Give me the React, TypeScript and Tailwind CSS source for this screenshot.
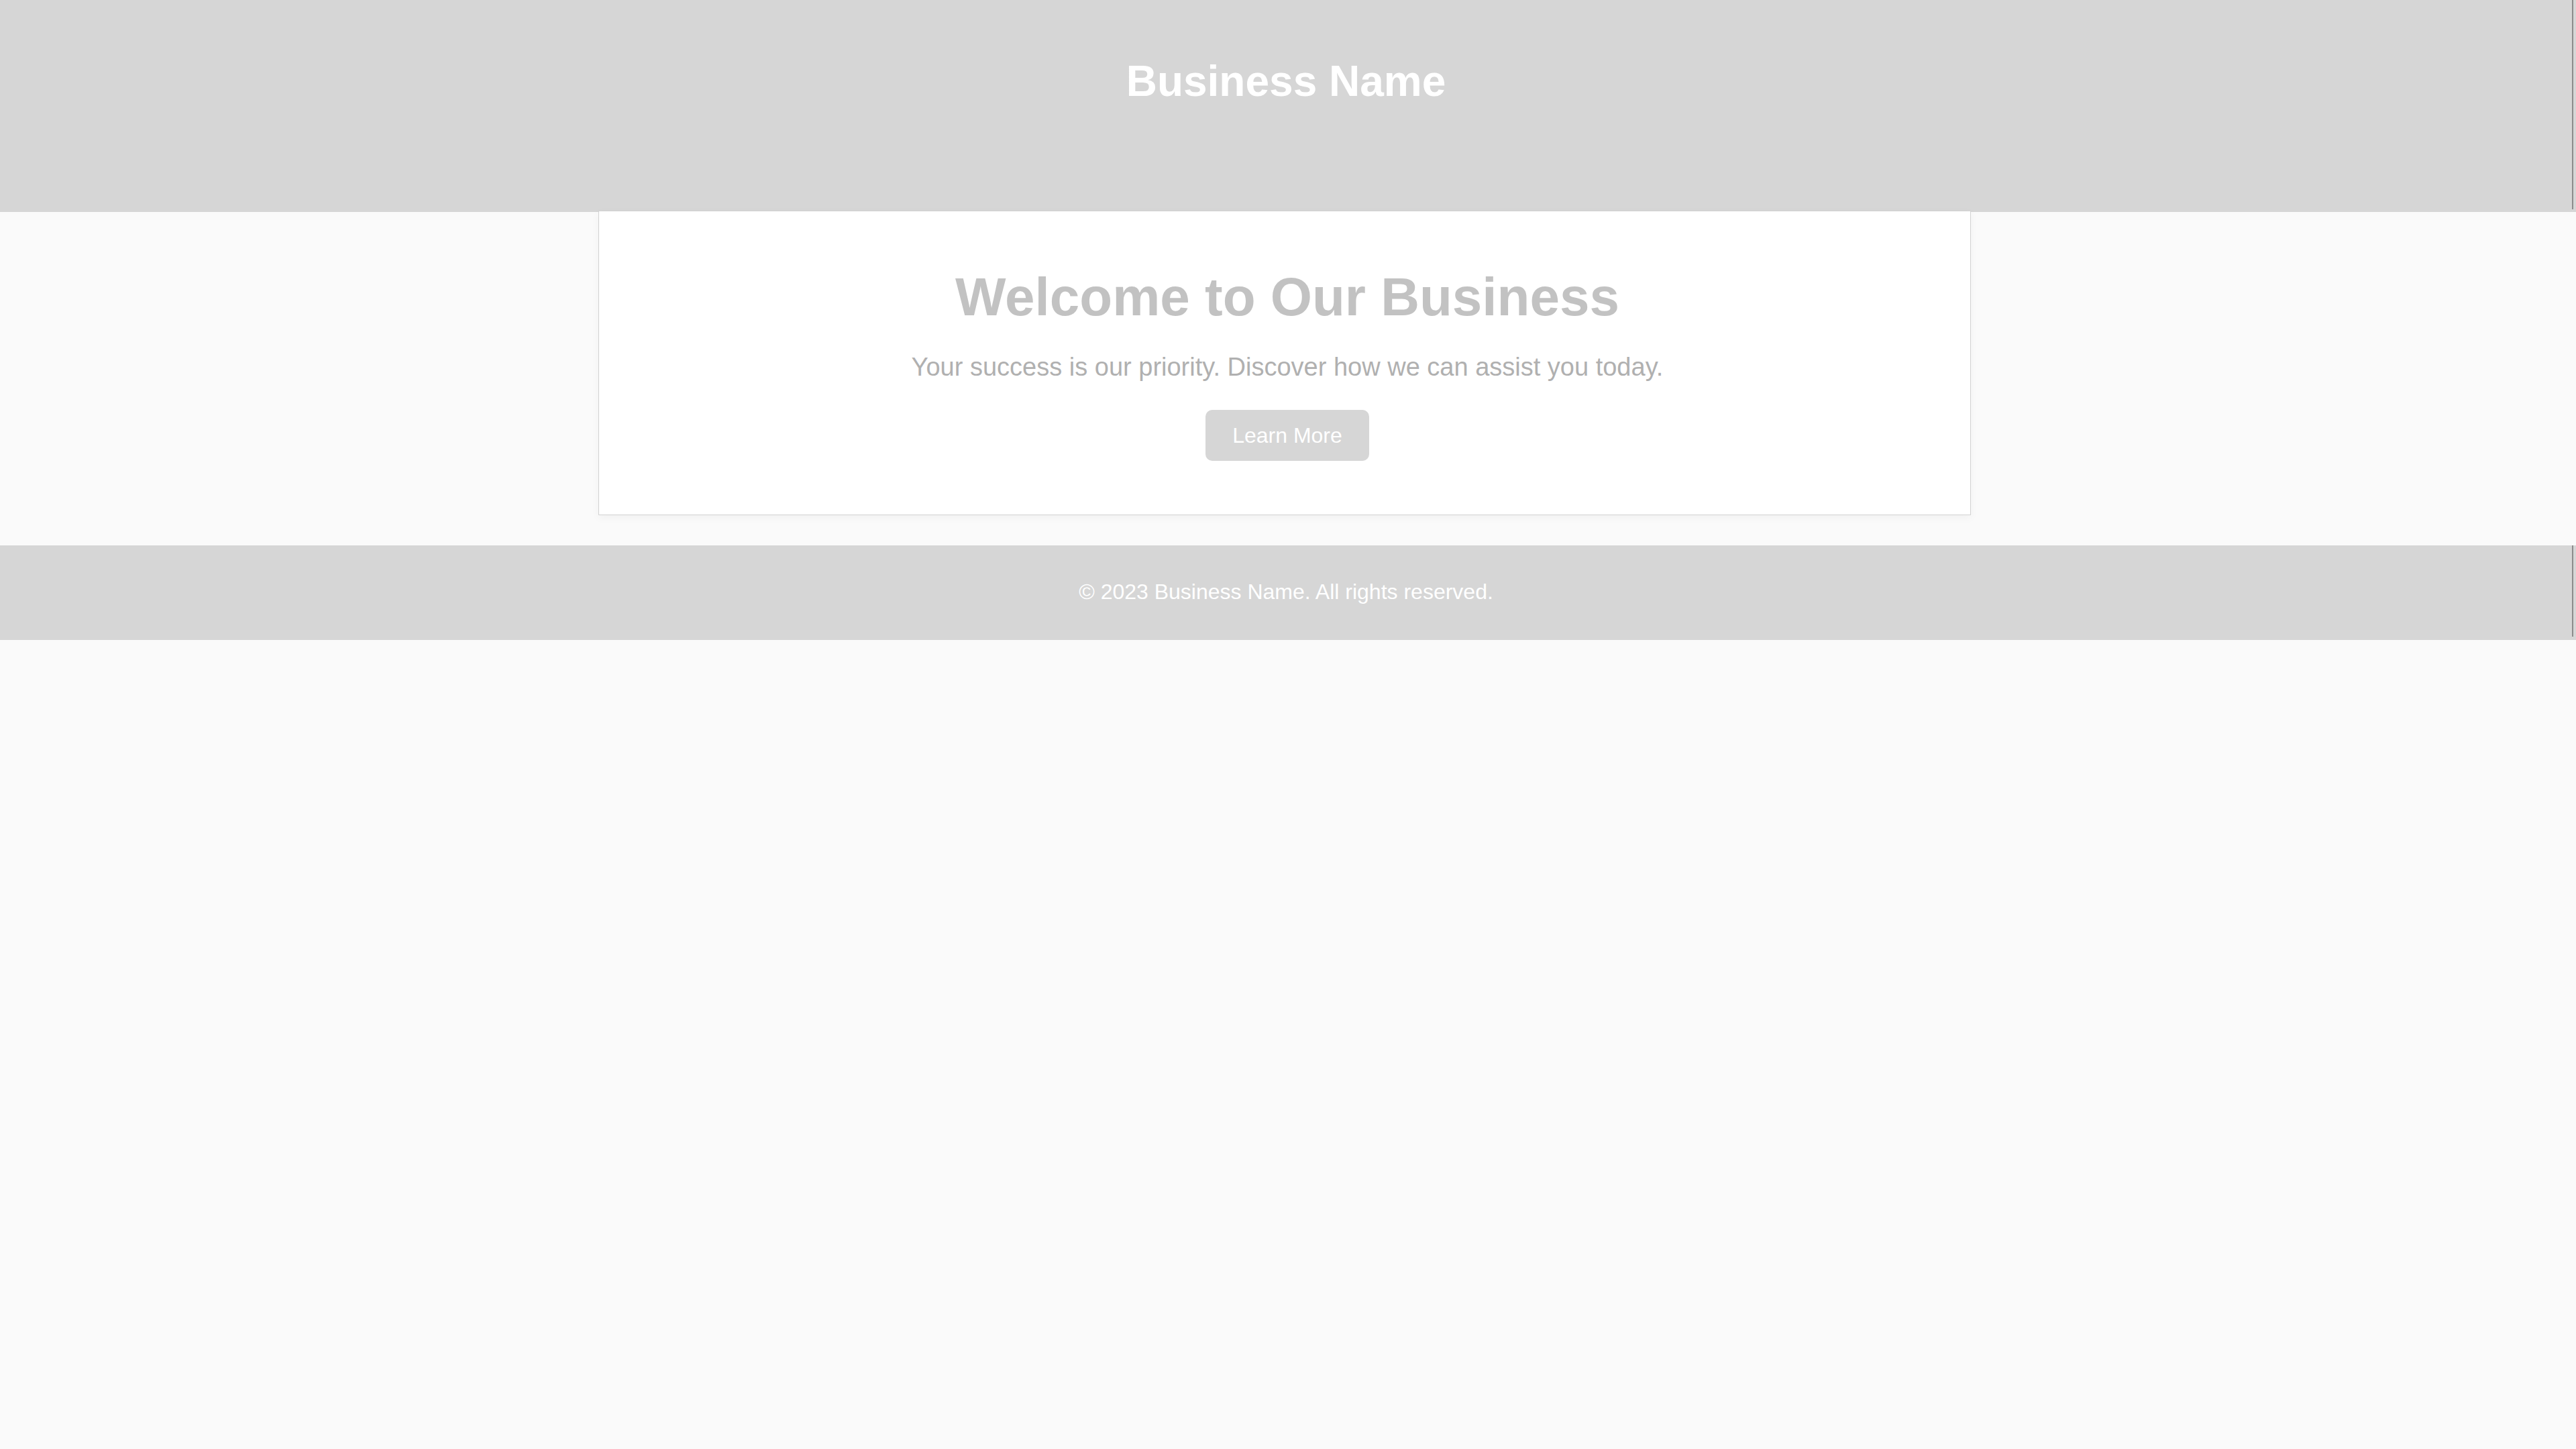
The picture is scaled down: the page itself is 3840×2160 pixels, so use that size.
import React from 'react';

const App: React.FC = () => {
  return (
    <div className="min-h-screen bg-[#fafafa] font-['Liberation_Sans',Arial,sans-serif]">
      <header className="bg-[#d6d6d6] h-[316px]">
        <div className="w-[3836px] h-[312px] border-r-2 border-[#8c8c8c] pt-[83px] text-center">
          <h1 className="text-white text-[64px] leading-[76px] font-bold">Business Name</h1>
        </div>
      </header>

      <div className="w-[3830px]">
        <main className="relative z-10 -mt-[2px] mx-auto w-[2046px] bg-white border border-[#d2d2d2] shadow-[0_4px_12px_rgba(0,0,0,0.04)] pt-[80px] pb-[80px] pl-[8px] text-center">
          <h2 className="text-[80px] leading-[96px] font-bold text-[#c2c2c2]">Welcome to Our Business</h2>
          <p className="mt-[32px] text-[38px] leading-[48px] text-[#b0b0b0]">
            Your success is our priority. Discover how we can assist you today.
          </p>
          <button className="mt-[40px] bg-[#d6d6d6] text-white text-[32px] leading-[36px] px-[40px] py-[20px] rounded-[10px]">
            Learn More
          </button>
        </main>
      </div>

      <footer className="mt-[45px] bg-[#d6d6d6] h-[141px]">
        <div className="w-[3836px] h-[136px] border-r-2 border-[#8c8c8c] pt-[49px] text-center">
          <p className="text-white text-[32px] leading-[40px]">© 2023 Business Name. All rights reserved.</p>
        </div>
      </footer>
    </div>
  );
};

export default App;
